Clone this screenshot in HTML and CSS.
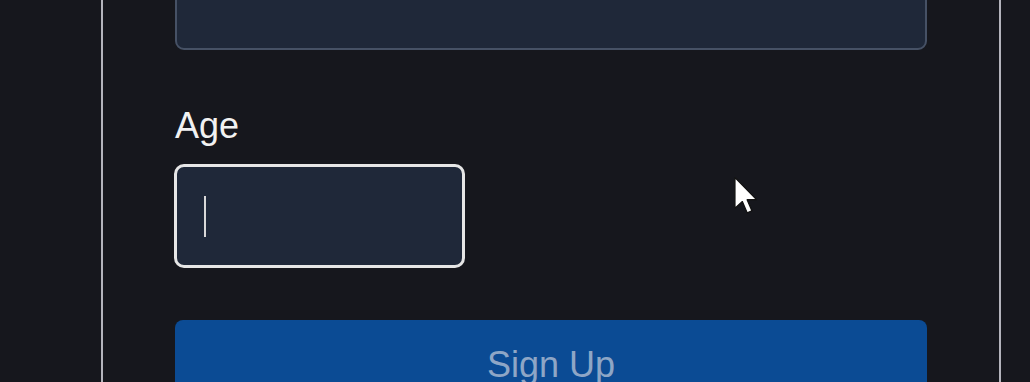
FILE: index.html
```html
<!DOCTYPE html>
<html>
<head>
<meta charset="utf-8">
<link rel="stylesheet" href="styles.css">
</head>
<body>
<div class="page">
  <div class="card">
    <div class="field-top"></div>
    <label class="label">Age</label>
    <div class="age-input"><span class="caret"></span></div>
    <button class="submit">Sign Up</button>
  </div>
</div>
<svg class="pointer" width="27" height="40" viewBox="0 0 17 26">
  <path d="M1 1 L1 21 L5.8 16.6 L9 24 L12 22.6 L8.9 15.4 L15 15.4 Z" fill="#ffffff" stroke="#111" stroke-width="0.8" stroke-linejoin="round"/>
</svg>
</body>
</html>
```
FILE: styles.css
```css
html, body {
  margin: 0;
  padding: 0;
  background: #16171d;
  height: 100%;
  overflow: hidden;
  font-family: "Liberation Sans", Arial, sans-serif;
}
.page {
  padding-left: 101px;
  width: 900px;
}
.card {
  border-left: 2px solid #b4b4bc;
  border-right: 2px solid #b4b4bc;
  padding: 0 72px;
  height: 600px;
  margin-top: -53px;
  box-sizing: border-box;
  display: flex;
  flex-direction: column;
  align-items: flex-start;
}
.field-top {
  width: 752px;
  height: 103px;
  box-sizing: border-box;
  background: #1f2839;
  border: 2px solid #465165;
  border-radius: 9px;
}
.label {
  margin-top: 55px;
  font-size: 36px;
  line-height: 42px;
  color: #f2f2f2;
  height: 42px;
}
.age-input {
  margin-top: 17px;
  width: 291px;
  height: 104px;
  box-sizing: border-box;
  background: #1f2839;
  border: 3px solid #e6e6e6;
  border-radius: 10px;
  padding: 29px 0 0 27px;
  margin-left: -1px;
}
.caret {
  display: block;
  width: 2px;
  height: 41px;
  background: #d8d8d8;
}
.submit {
  margin-top: 52px;
  width: 752px;
  height: 100px;
  border: none;
  border-radius: 8px;
  background: #0b4b94;
  color: #8ea6c6;
  font-family: "Liberation Sans", Arial, sans-serif;
  font-size: 36px;
  line-height: 42px;
  padding: 24px 0 0;
  text-align: center;
  display: flex;
  justify-content: center;
  align-items: flex-start;
}
.pointer {
  position: absolute;
  left: 733px;
  top: 176px;
}
```
